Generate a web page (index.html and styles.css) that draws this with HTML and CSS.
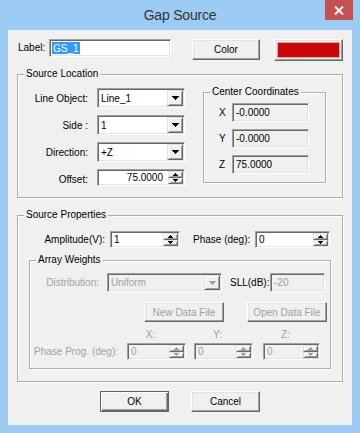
FILE: index.html
```html
<!DOCTYPE html>
<html>
<head>
<meta charset="utf-8">
<link rel="stylesheet" href="styles.css">
</head>
<body>
<div class="frame">
  <div class="titlebar">
    <span class="title">Gap Source</span>
    <div class="close">
      <svg width="10" height="9" viewBox="0 0 10 9"><path d="M1 0.5L9 8.5M9 0.5L1 8.5" stroke="#fff" stroke-width="2"/></svg>
    </div>
  </div>
  <div class="client">
    <div class="label-row">
      <span class="lbl-label">Label:</span>
      <div class="field label-edit"><span class="sel">GS_1</span></div>
      <div class="btn color-btn">Color</div>
      <div class="btn swatch-btn"><div class="swatch"></div></div>
    </div>

    <div class="group loc">
      <span class="gtitle">Source Location</span>
      <div class="form">
        <span class="flabel">Line Object:</span>
        <div class="field combo"><span class="val">Line_1</span><span class="arrow"><svg width="7" height="4" viewBox="0 0 7 4"><path d="M0 0h7v1h-1v1h-1v1h-1v1h-1v-1h-1v-1h-1v-1h-1z"/></svg></span></div>
        <span class="flabel">Side :</span>
        <div class="field combo"><span class="val">1</span><span class="arrow"><svg width="7" height="4" viewBox="0 0 7 4"><path d="M0 0h7v1h-1v1h-1v1h-1v1h-1v-1h-1v-1h-1v-1h-1z"/></svg></span></div>
        <span class="flabel">Direction:</span>
        <div class="field combo"><span class="val">+Z</span><span class="arrow"><svg width="7" height="4" viewBox="0 0 7 4"><path d="M0 0h7v1h-1v1h-1v1h-1v1h-1v-1h-1v-1h-1v-1h-1z"/></svg></span></div>
        <span class="flabel">Offset:</span>
        <div class="field spinfield offset"><span class="val num">75.0000</span>
          <span class="spin"><span class="sbtn"><svg width="5" height="3" viewBox="0 0 5 3"><path d="M2 0h1v1h1v1h1v1h-5v-1h1v-1h1z"/></svg></span><span class="sbtn"><svg width="5" height="3" viewBox="0 0 5 3"><path d="M0 0h5v1h-1v1h-1v1h-1v-1h-1v-1h-1z"/></svg></span></span>
        </div>
      </div>
      <div class="group center">
        <span class="gtitle">Center Coordinates</span>
        <div class="coords">
          <span class="clabel">X</span><div class="field ro"><span class="val">-0.0000</span></div>
          <span class="clabel">Y</span><div class="field ro"><span class="val">-0.0000</span></div>
          <span class="clabel">Z</span><div class="field ro"><span class="val">75.0000</span></div>
        </div>
      </div>
    </div>

    <div class="group props">
      <span class="gtitle">Source Properties</span>
      <div class="amp-row">
        <span class="amp-label">Amplitude(V):</span>
        <div class="field spinfield amp"><span class="val">1</span>
          <span class="spin"><span class="sbtn"><svg width="5" height="3" viewBox="0 0 5 3"><path d="M2 0h1v1h1v1h1v1h-5v-1h1v-1h1z"/></svg></span><span class="sbtn"><svg width="5" height="3" viewBox="0 0 5 3"><path d="M0 0h5v1h-1v1h-1v1h-1v-1h-1v-1h-1z"/></svg></span></span>
        </div>
        <span class="phase-label">Phase (deg):</span>
        <div class="field spinfield phase"><span class="val">0</span>
          <span class="spin"><span class="sbtn"><svg width="5" height="3" viewBox="0 0 5 3"><path d="M2 0h1v1h1v1h1v1h-5v-1h1v-1h1z"/></svg></span><span class="sbtn"><svg width="5" height="3" viewBox="0 0 5 3"><path d="M0 0h5v1h-1v1h-1v1h-1v-1h-1v-1h-1z"/></svg></span></span>
        </div>
      </div>

      <div class="group aw">
        <span class="gtitle">Array Weights</span>
        <div class="dist-row">
          <span class="dist-label dis">Distribution:</span>
          <div class="field combo disabled dist"><span class="val">Uniform</span><span class="arrow"><svg width="7" height="4" viewBox="0 0 7 4"><path d="M0 0h7v1h-1v1h-1v1h-1v1h-1v-1h-1v-1h-1v-1h-1z"/></svg></span></div>
          <span class="sll-label">SLL(dB):</span>
          <div class="field ro disabled sll"><span class="val">-20</span></div>
        </div>
        <div class="file-row">
          <div class="btn dis file-btn">New Data File</div>
          <div class="btn dis file-btn open">Open Data File</div>
        </div>
        <div class="pp-grid">
          <span></span>
          <span class="axis dis">X:</span>
          <span class="axis dis">Y:</span>
          <span class="axis dis">Z:</span>
          <span class="pp-label dis">Phase Prog. (deg):</span>
          <div class="field spinfield disabled pp"><span class="val">0</span>
            <span class="spin"><span class="sbtn"><svg width="5" height="3" viewBox="0 0 5 3"><path d="M2 0h1v1h1v1h1v1h-5v-1h1v-1h1z"/></svg></span><span class="sbtn"><svg width="5" height="3" viewBox="0 0 5 3"><path d="M0 0h5v1h-1v1h-1v1h-1v-1h-1v-1h-1z"/></svg></span></span>
          </div>
          <div class="field spinfield disabled pp"><span class="val">0</span>
            <span class="spin"><span class="sbtn"><svg width="5" height="3" viewBox="0 0 5 3"><path d="M2 0h1v1h1v1h1v1h-5v-1h1v-1h1z"/></svg></span><span class="sbtn"><svg width="5" height="3" viewBox="0 0 5 3"><path d="M0 0h5v1h-1v1h-1v1h-1v-1h-1v-1h-1z"/></svg></span></span>
          </div>
          <div class="field spinfield disabled pp"><span class="val">0</span>
            <span class="spin"><span class="sbtn"><svg width="5" height="3" viewBox="0 0 5 3"><path d="M2 0h1v1h1v1h1v1h-5v-1h1v-1h1z"/></svg></span><span class="sbtn"><svg width="5" height="3" viewBox="0 0 5 3"><path d="M0 0h5v1h-1v1h-1v1h-1v-1h-1v-1h-1z"/></svg></span></span>
          </div>
        </div>
      </div>
    </div>

    <div class="bottom-row">
      <div class="btn default dlg-btn">OK</div>
      <div class="btn dlg-btn cancel">Cancel</div>
    </div>
  </div>
</div>
</body>
</html>
```

FILE: styles.css
```css
* { box-sizing: border-box; }
body {
  margin: 0;
  font-family: "Liberation Sans", Arial, sans-serif;
  font-size: 10px;
  color: #000;
}
.frame {
  width: 360px;
  height: 433px;
  background: #9ccbf3;
  overflow: hidden;
}
.titlebar {
  height: 30px;
  display: grid;
  grid-template-columns: 1fr auto 1fr;
}
.title {
  grid-column: 2;
  font-size: 14px;
  letter-spacing: -0.2px;
  line-height: 30px;
  color: #333;
}
.close {
  grid-column: 3;
  justify-self: end;
  align-self: start;
  margin-right: 7px;
  width: 28px;
  height: 20px;
  background: #c75050;
  display: flex;
  align-items: center;
  justify-content: center;
}
.client {
  margin: 0 8px;
  height: 395px;
  background: #f0f0f0;
  padding-top: 9px;
}

/* generic controls */
.field {
  border: 1px solid;
  border-color: #a0a0a0 #ffffff #ffffff #a0a0a0;
  box-shadow: inset 1px 1px #696969, inset -1px -1px #e3e3e3;
  padding: 1px;
  background: #fff;
  display: flex;
  align-items: stretch;
}
.field .val {
  flex: 1;
  display: flex;
  align-items: center;
  padding-left: 2px;
  white-space: nowrap;
  overflow: hidden;
}
.field .val.num { justify-content: flex-end; padding-right: 5px; }
.field.ro { background: #f0f0f0; }
.field.disabled { background: #f0f0f0; color: #a0a0a0; }
.field.disabled svg { fill: #a0a0a0; }

.arrow, .sbtn {
  background: #f0f0f0;
  border: 1px solid;
  border-color: #e3e3e3 #696969 #696969 #e3e3e3;
  box-shadow: inset 1px 1px #fff, inset -1px -1px #a0a0a0;
  display: flex;
  align-items: center;
  justify-content: center;
}
.arrow { width: 16px; }
.spin { width: 15px; display: flex; flex-direction: column; }
.sbtn { flex: 1; }

.btn {
  background: #f0f0f0;
  border: 1px solid;
  border-color: #fff #696969 #696969 #fff;
  box-shadow: inset -1px -1px #a0a0a0, inset 1px 1px #e3e3e3;
  display: flex;
  align-items: center;
  justify-content: center;
  font-size: 10px;
}
.btn.default {
  border: 1px solid #646464;
  box-shadow: inset 1px 1px #fff, inset -1px -1px #696969, inset -2px -2px #a0a0a0;
}
.dis { color: #a0a0a0; }

/* group box */
.group {
  position: relative;
  border: 1px solid #adadad;
  box-shadow: inset 1px 1px #fff, 1px 1px #fff;
}
.gtitle {
  position: absolute;
  top: -7px;
  left: 6px;
  padding: 0 2px;
  background: #f0f0f0;
  line-height: 12px;
  white-space: nowrap;
}

/* label row */
.label-row {
  display: flex;
  align-items: flex-start;
  padding-left: 10px;
  height: 22px;
}
.lbl-label { width: 31px; line-height: 18px; }
.label-edit { width: 122px; height: 18px; }
.sel {
  background: #3399ff;
  color: #fff;
  margin: 1px 0 1px 1px;
  padding: 0 1px;
  display: flex;
  align-items: center;
}
.color-btn { margin-left: 21px; width: 68px; height: 21px; }
.swatch-btn { margin-left: 14px; width: 69px; height: 22px; padding: 2px; }
.swatch { flex: 1; align-self: stretch; background: #c80808; border: 1px solid #e8a0a0; }

/* source location */
.loc {
  margin: 13px 0 0 9px;
  width: 326px;
  height: 124px;
  display: flex;
  align-items: flex-start;
}
.form {
  display: grid;
  grid-template-columns: 70px 88px;
  column-gap: 9px;
  row-gap: 7px;
  grid-auto-rows: 20px;
  padding-top: 13px;
}
.flabel { text-align: right; align-self: center; }
.combo { height: 20px; }
.offset { height: 17px; }
.center {
  margin: 17px 0 0 18px;
  width: 123px;
  height: 91px;
}
.coords {
  display: grid;
  grid-template-columns: 13px 77px;
  grid-auto-rows: 19px;
  row-gap: 7px;
  padding: 10px 0 0 15px;
}
.clabel { align-self: center; }

/* source properties */
.props {
  margin: 17px 0 0 9px;
  width: 326px;
  height: 167px;
}
.amp-row {
  display: flex;
  align-items: center;
  margin-top: 15px;
}
.amp-label { width: 87px; text-align: right; margin-right: 5px; }
.amp { width: 70px; height: 17px; }
.phase-label { margin-left: 13px; width: 57px; margin-right: 5px; white-space: nowrap; }
.phase { width: 75px; height: 17px; }

.aw {
  margin: 12px 0 0 11px;
  width: 302px;
  height: 109px;
}
.dist-row {
  display: flex;
  align-items: center;
  margin-top: 12px;
}
.dist-label { width: 69px; text-align: right; margin-right: 8px; }
.dist { width: 115px; height: 19px; }
.sll-label { margin-left: 8px; width: 40px; white-space: nowrap; }
.sll { width: 55px; height: 19px; }

.file-row {
  display: flex;
  margin-top: 10px;
  padding-left: 114px;
}
.file-btn { width: 80px; height: 20px; }
.file-btn.open { margin-left: 23px; }

.pp-grid {
  display: grid;
  grid-template-columns: 89px 59px 59px 59px;
  grid-template-rows: 12px 17px;
  column-gap: 8px;
  row-gap: 2px;
  margin-top: 7px;
}
.pp-grid > :nth-child(4), .pp-grid > :nth-child(8) { margin-left: 2px; }
.axis { text-align: center; padding-right: 12px; line-height: 12px; }
.pp-label { text-align: right; padding-right: 1px; align-self: center; white-space: nowrap; }

/* bottom buttons */
.bottom-row {
  display: flex;
  margin-top: 9px;
  padding-left: 92px;
}
.dlg-btn { width: 69px; height: 21px; }
.dlg-btn.cancel { margin-left: 22px; }
```
